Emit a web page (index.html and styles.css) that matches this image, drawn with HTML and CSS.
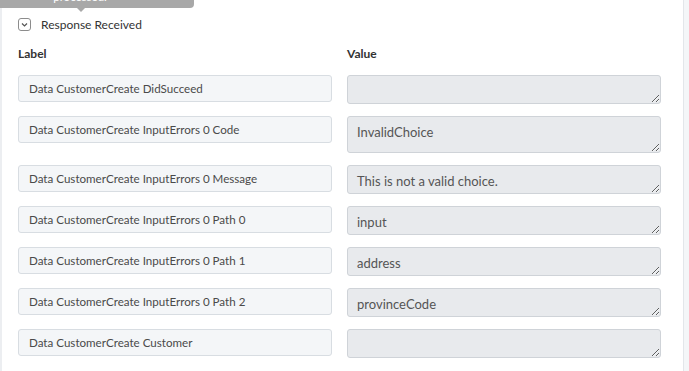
FILE: index.html
```html
<!DOCTYPE html>
<html>
<head>
<meta charset="utf-8">
<link rel="stylesheet" href="styles.css">
</head>
<body>
<div class="page">
  <div class="panel">
    <div class="tooltip">processed.</div>
    <div class="toggle">
      <span class="chev"><svg width="9" height="9" viewBox="0 0 9 9"><path d="M2 3.5 L4.5 6 L7 3.5" fill="none" stroke="#555" stroke-width="1.2"/></svg></span>
      <span class="toggle-text">Response Received</span>
    </div>
    <div class="grid">
      <div class="head">Label</div>
      <div class="head">Value</div>

      <div class="label-box">Data CustomerCreate DidSucceed</div>
      <textarea class="value-box" readonly></textarea>

      <div class="label-box">Data CustomerCreate InputErrors 0 Code</div>
      <textarea class="value-box tall" readonly>InvalidChoice</textarea>

      <div class="label-box">Data CustomerCreate InputErrors 0 Message</div>
      <textarea class="value-box" readonly>This is not a valid choice.</textarea>

      <div class="label-box">Data CustomerCreate InputErrors 0 Path 0</div>
      <textarea class="value-box" readonly>input</textarea>

      <div class="label-box">Data CustomerCreate InputErrors 0 Path 1</div>
      <textarea class="value-box" readonly>address</textarea>

      <div class="label-box">Data CustomerCreate InputErrors 0 Path 2</div>
      <textarea class="value-box" readonly>provinceCode</textarea>

      <div class="label-box">Data CustomerCreate Customer</div>
      <textarea class="value-box" readonly></textarea>
    </div>
  </div>
  <div class="sidebar"></div>
</div>
</body>
</html>
```

FILE: styles.css
```css
html, body {
  margin: 0;
  padding: 0;
  background: #ffffff;
  font-family: Lato, "Open Sans", sans-serif;
  color: #333;
  overflow: hidden;
}
.page {
  display: flex;
  height: 371px;
  width: 689px;
}
.panel {
  position: relative;
  flex: 1;
  border-left: 2px solid #eceef1;
  padding: 17px 0 0 16px;
}
.sidebar {
  width: 5px;
  border-left: 1px solid #e3e6ea;
  background: #f4f6f8;
}
.tooltip {
  position: absolute;
  top: -12px;
  left: -36px;
  width: 228px;
  height: 18px;
  background: #a8a8a8;
  color: #fff;
  font-size: 11.5px;
  line-height: 14px;
  padding-top: 2px;
  text-align: center;
  border-radius: 0 0 4px 4px;
}
.tooltip::after {
  content: "";
  position: absolute;
  left: 111px;
  top: 20px;
  border-left: 4px solid transparent;
  border-right: 4px solid transparent;
  border-top: 4px solid #a8a8a8;
}
.toggle {
  display: flex;
  align-items: center;
  gap: 10px;
  height: 14px;
}
.chev {
  width: 11px;
  height: 11px;
  border: 1px solid #8c8c8c;
  border-radius: 3px;
  display: flex;
  align-items: center;
  justify-content: center;
}
.toggle-text {
  font-size: 12px;
  color: #333;
}
.grid {
  display: grid;
  grid-template-columns: 314px 314px;
  column-gap: 15px;
  row-gap: 12px;
  align-items: start;
  margin-top: 15px;
}
.head {
  font-size: 12px;
  font-weight: bold;
  color: #333;
  line-height: 15px;
  margin-bottom: 2px;
}
.label-box {
  box-sizing: border-box;
  height: 27px;
  border: 1px solid #d8dde2;
  border-radius: 3px;
  background: #f4f6f8;
  font-size: 11.6px;
  line-height: 25px;
  padding: 0 10px;
  color: #4a4a4a;
  white-space: nowrap;
}
.value-box {
  box-sizing: border-box;
  display: block;
  width: 314px;
  height: 29px;
  margin: 0;
  border: 1px solid #cfd3d8;
  border-radius: 3px;
  background: #e8eaed;
  font-family: Lato, "Open Sans", sans-serif;
  font-size: 13px;
  line-height: 16px;
  padding: 7px 9px 5px;
  color: #555;
  resize: vertical;
  overflow: hidden;
}
.value-box.tall {
  height: 37px;
}
```
